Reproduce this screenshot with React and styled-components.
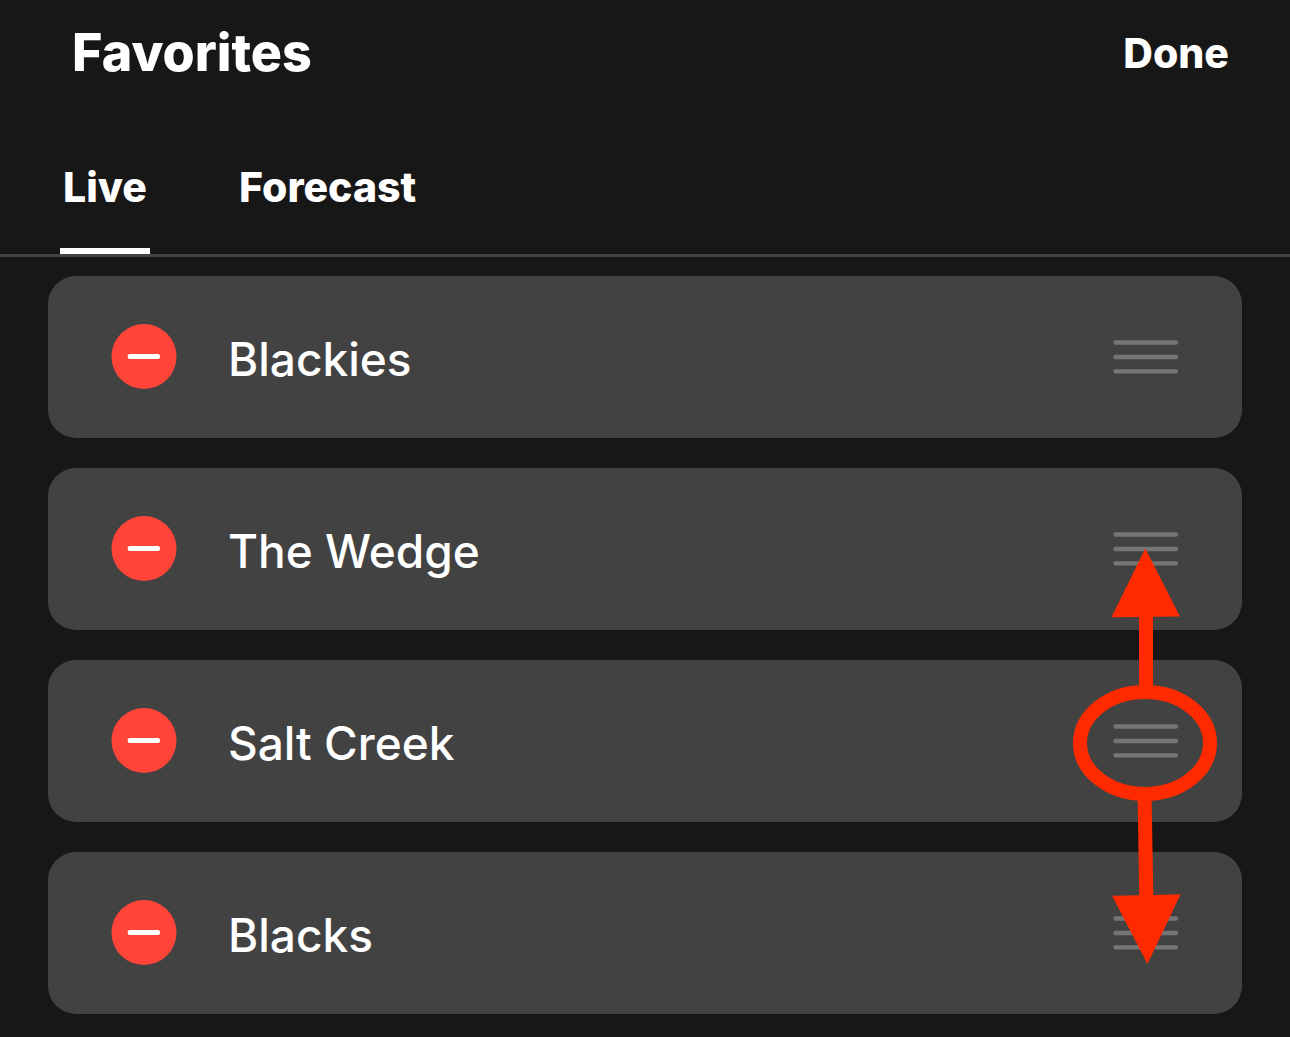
import { useState } from "react";
import styled, { createGlobalStyle } from "styled-components";

const spots = ["Blackies", "The Wedge", "Salt Creek", "Blacks"];
const tabs = ["Live", "Forecast"];

export default function App() {
  const [activeTab, setActiveTab] = useState("Live");

  return (
    <>
      <GlobalStyle />
      <Page>
        <Header>
          <Title>Favorites</Title>
          <DoneButton type="button">Done</DoneButton>
        </Header>
        <Tabs>
          {tabs.map((tab) => (
            <Tab
              key={tab}
              type="button"
              $active={tab === activeTab}
              onClick={() => setActiveTab(tab)}
            >
              {tab}
            </Tab>
          ))}
        </Tabs>
        <SpotList>
          {spots.map((spot) => (
            <SpotCard key={spot}>
              <RemoveButton type="button" aria-label={`Remove ${spot}`}>
                <MinusIcon />
              </RemoveButton>
              <SpotName>{spot}</SpotName>
              <DragHandle type="button" aria-label={`Reorder ${spot}`}>
                <HandleIcon />
                {spot === "Salt Creek" && <DragHint />}
              </DragHandle>
            </SpotCard>
          ))}
        </SpotList>
      </Page>
    </>
  );
}

function MinusIcon() {
  return (
    <svg width="66" height="66" viewBox="0 0 66 66" aria-hidden="true">
      <circle cx="33" cy="32.5" r="32.5" fill="#ff453a" />
      <rect x="16.6" y="30" width="32.5" height="5" rx="2.2" fill="#fff" />
    </svg>
  );
}

function HandleIcon() {
  return (
    <svg width="65" height="36" viewBox="0 0 65 36" aria-hidden="true">
      <g fill="#757577">
        <rect x="0.5" y="1.3" width="64.5" height="4.4" rx="1.8" />
        <rect x="0.5" y="15.8" width="64.5" height="4.4" rx="1.8" />
        <rect x="0.5" y="30.2" width="64.5" height="4.4" rx="1.8" />
      </g>
    </svg>
  );
}

// Circle round the handle with an arrow to the rows above and below
function DragHint() {
  return (
    <Hint width="146" height="418" viewBox="1 0 146 418" aria-hidden="true">
      <ellipse
        cx="73"
        cy="195"
        rx="65"
        ry="51"
        fill="none"
        stroke="#ff2a00"
        strokeWidth="14"
      />
      <g fill="#ff2a00">
        <path d="M73.3 0.4 108 68.5 81 68.7V144H67V69L39.5 69.2Z" />
        <path d="M65.6 248H79.6L81.3 347 108.6 346.2 75.5 416 40 347.7 67.2 347.2Z" />
      </g>
    </Hint>
  );
}

const GlobalStyle = createGlobalStyle`
  * {
    box-sizing: border-box;
  }

  body {
    margin: 0;
    background: #171717;
    color: #fff;
    font-family: Inter, "Liberation Sans", sans-serif;
  }

  button {
    padding: 0;
    border: none;
    background: none;
    color: inherit;
    font-family: inherit;
    cursor: pointer;
  }
`;

const Page = styled.main`
  min-height: 100vh;
`;

const Header = styled.header`
  display: flex;
  align-items: center;
  justify-content: space-between;
  padding: 23px 61px 0 72px;
`;

const Title = styled.h1`
  margin: 0;
  font-size: 52px;
  font-weight: 800;
  line-height: 60px;
`;

const DoneButton = styled.button`
  font-size: 41px;
  font-weight: 800;
  line-height: 60px;
`;

const Tabs = styled.nav`
  display: flex;
  gap: 89px;
  padding: 74px 60px 0;
  border-bottom: 3px solid #444;
`;

const Tab = styled.button`
  min-width: 90px;
  padding-bottom: 31px;
  border-bottom: 6px solid ${({ $active }) => ($active ? "#fff" : "transparent")};
  font-size: 41px;
  font-weight: 800;
  line-height: 60px;
`;

const SpotList = styled.ul`
  display: flex;
  flex-direction: column;
  gap: 30px;
  margin: 0;
  padding: 19px 48px 23px;
  list-style: none;
`;

const SpotCard = styled.li`
  display: flex;
  align-items: center;
  min-height: 162px;
  padding: 0 64px 0 63px;
  border-radius: 28px;
  background: #424242;
`;

const RemoveButton = styled.button`
  display: flex;
  border-radius: 50%;
`;

const SpotName = styled.span`
  flex: 1;
  padding: 3px 0 0 51px;
  font-size: 46px;
  font-weight: 500;
  line-height: 60px;
`;

const DragHandle = styled.button`
  position: relative;
  display: flex;
  cursor: grab;
`;

const Hint = styled.svg`
  position: absolute;
  top: 50%;
  left: 50%;
  z-index: 1;
  transform: translate(-50%, -193px);
  pointer-events: none;
`;
